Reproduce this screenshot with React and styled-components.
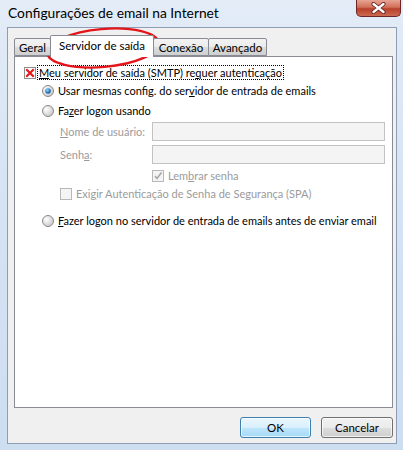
import styled, { createGlobalStyle } from 'styled-components';

const GlobalStyle = createGlobalStyle`
  html, body {
    margin: 0;
    padding: 0;
    background: #ffffff;
  }
  body {
    font-family: Lato, "Liberation Sans", sans-serif;
    font-size: 11px;
    color: #000;
  }
`;

const Window = styled.div`
  position: relative;
  width: 403px;
  height: 450px;
  box-sizing: border-box;
  padding: 0 6px 6px 7px;
  display: flex;
  flex-direction: column;
  background: linear-gradient(180deg, #e3ecf7 0%, #d6e4f4 40%, #cddef1 100%);
`;

const TitleBar = styled.div`
  height: 27px;
  display: flex;
  justify-content: space-between;
  align-items: flex-start;
`;

const Title = styled.div`
  font-size: 13.8px;
  line-height: 27px;
  margin-left: 1px;
  margin-top: -1px;
`;

const CloseButton = styled.div`
  width: 45px;
  height: 17px;
  margin-right: -4px;
  box-sizing: border-box;
  border: 1px solid #6d2626;
  border-top: none;
  border-radius: 0 0 5px 5px;
  background: linear-gradient(180deg, #e8a493 0%, #d0705a 45%, #b8402a 55%, #cc6a50 100%);
  display: flex;
  align-items: center;
  justify-content: center;
`;

const Body = styled.div`
  flex: 1;
  box-sizing: border-box;
  border: 1px solid #8d9db3;
  background: #f0f0f0;
  padding: 7px 3px 5px 6px;
  display: flex;
  flex-direction: column;
`;

const TabStrip = styled.div`
  height: 21px;
  display: flex;
  align-items: flex-end;
  position: relative;
  z-index: 1;
`;

const Tab = styled.div`
  box-sizing: border-box;
  width: ${p => p.$w}px;
  height: ${p => (p.$active ? 22 : 18)}px;
  margin-bottom: ${p => (p.$active ? -1 : 0)}px;
  border: 1px solid #898c95;
  border-bottom: ${p => (p.$active ? 'none' : '1px solid #898c95')};
  margin-left: -1px;
  &:first-child { margin-left: 0; }
  border-radius: 2px 2px 0 0;
  background: ${p => (p.$active ? '#ffffff' : 'linear-gradient(180deg, #f3f3f3 0%, #ebebeb 50%, #dddddd 51%, #cfcfcf 100%)')};
  padding-top: ${p => (p.$active ? 2 : 1)}px;
  text-align: center;
  font-size: 11.5px;
  line-height: 15px;
  z-index: ${p => (p.$active ? 2 : 1)};
`;

const Panel = styled.div`
  height: 352px;
  box-sizing: border-box;
  border: 1px solid #898c95;
  background: #ffffff;
  padding-left: 9px;
`;

const Row = styled.div`
  display: flex;
  align-items: center;
  height: ${p => p.$h || 15}px;
  margin-top: ${p => p.$mt}px;
  padding-left: ${p => p.$indent || 0}px;
  color: ${p => (p.$disabled ? '#9b9b9b' : '#000')};
  white-space: nowrap;
`;

const Label = styled.span`
  margin-left: ${p => p.$gap || 4}px;
  line-height: 13px;
`;

const FocusLabel = styled.span`
  margin-left: 1px;
  padding: 0 1px;
  border: 1px dotted #000;
  line-height: 13px;
`;

const FieldLabel = styled.span`
  width: 92px;
  color: #9b9b9b;
`;

const TextBox = styled.div`
  width: 233px;
  height: 19px;
  box-sizing: border-box;
  border: 1px solid #c2c2c2;
  background: #f4f4f4;
`;

const Key = styled.span`
  text-decoration: underline;
  text-underline-offset: 1px;
`;

const ButtonRow = styled.div`
  display: flex;
  justify-content: flex-end;
  gap: 10px;
  margin-top: 9px;
`;

const Button = styled.div`
  width: ${p => p.$w}px;
  height: 21px;
  box-sizing: border-box;
  border: 1px solid ${p => (p.$default ? '#3c7fb1' : '#707070')};
  border-radius: 3px;
  background: ${p => (p.$default
    ? 'linear-gradient(180deg, #eaf6fd 0%, #d9f0fc 50%, #bee6fd 51%, #a7d9f5 100%)'
    : 'linear-gradient(180deg, #f2f2f2 0%, #ebebeb 50%, #dddddd 51%, #cfcfcf 100%)')};
  box-shadow: inset 0 0 0 1px rgba(255, 255, 255, 0.7);
  display: flex;
  align-items: center;
  justify-content: center;
  font-size: 11.5px;
`;

const Ring = styled.svg`
  position: absolute;
  left: 41px;
  top: 27px;
  pointer-events: none;
`;

function Radio({ checked }) {
  return (
    <svg width="12" height="12" viewBox="0 0 12 12">
      <defs>
        <radialGradient id={checked ? 'rg1' : 'rg0'} cx="0.35" cy="0.35" r="0.7">
          <stop offset="0" stopColor="#ffffff" />
          <stop offset="1" stopColor="#c8c8c8" />
        </radialGradient>
        <radialGradient id="dot" cx="0.4" cy="0.35" r="0.7">
          <stop offset="0" stopColor="#9fd6f8" />
          <stop offset="0.6" stopColor="#2a7fc4" />
          <stop offset="1" stopColor="#174d88" />
        </radialGradient>
      </defs>
      <circle cx="6" cy="6" r="5.5" fill={`url(#${checked ? 'rg1' : 'rg0'})`} stroke="#8a8a8a" />
      {checked && <circle cx="6" cy="6" r="2.8" fill="url(#dot)" />}
    </svg>
  );
}

function Check({ mark, disabled }) {
  return (
    <svg width="12" height="12" viewBox="0 0 12 12">
      <rect x="0.5" y="0.5" width="11" height="11" fill={disabled ? '#f4f4f4' : '#ffffff'} stroke={disabled ? '#b8b8b8' : '#8e8f8f'} />
      {mark === 'x' && (
        <path d="M3 3 L9 9 M9 3 L3 9" stroke="#e31b1b" strokeWidth="2.2" strokeLinecap="square" />
      )}
      {mark === 'v' && (
        <path d="M3 6 L5 8.5 L9.5 2.5" stroke="#a8a8a8" strokeWidth="1.6" fill="none" />
      )}
    </svg>
  );
}

export default function App() {
  return (
    <>
      <GlobalStyle />
      <Window>
        <TitleBar>
          <Title>Configurações de email na Internet</Title>
          <CloseButton>
            <svg width="17" height="12" viewBox="0 0 17 12">
              <path d="M3.5 2 L13.5 10 M13.5 2 L3.5 10" stroke="#5a1a1a" strokeWidth="4" strokeLinecap="round" />
              <path d="M3.5 2 L13.5 10 M13.5 2 L3.5 10" stroke="#ffffff" strokeWidth="2.4" strokeLinecap="round" />
            </svg>
          </CloseButton>
        </TitleBar>
        <Body>
          <TabStrip>
            <Tab $w={37}>Geral</Tab>
            <Tab $w={104} $active>Servidor de saída</Tab>
            <Tab $w={56}>Conexão</Tab>
            <Tab $w={59}>Avançado</Tab>
          </TabStrip>
          <Panel>
            <Row $mt={8}>
              <Check mark="x" />
              <FocusLabel>
                <Key>M</Key>eu servidor de saída (SMTP) re<Key>q</Key>uer autenticação
              </FocusLabel>
            </Row>
            <Row $mt={3} $indent={18}>
              <Radio checked />
              <Label>Usar mesmas config. do ser<Key>v</Key>idor de entrada de emails</Label>
            </Row>
            <Row $mt={5} $indent={18}>
              <Radio />
              <Label>Fa<Key>z</Key>er logon usando</Label>
            </Row>
            <Row $mt={4} $h={19} $indent={36}>
              <FieldLabel><Key>N</Key>ome de usuário:</FieldLabel>
              <TextBox />
            </Row>
            <Row $mt={4} $h={19} $indent={36}>
              <FieldLabel>Senh<Key>a</Key>:</FieldLabel>
              <TextBox />
            </Row>
            <Row $mt={4} $indent={128} $disabled>
              <Check mark="v" disabled />
              <Label>Lem<Key>b</Key>rar senha</Label>
            </Row>
            <Row $mt={3} $indent={36} $disabled>
              <Check disabled />
              <Label>Exi<Key>g</Key>ir Autenticação de Senha de Segurança (SPA)</Label>
            </Row>
            <Row $mt={12} $indent={18}>
              <Radio />
              <Label><Key>F</Key>azer logon no servidor de entrada de emails antes de enviar email</Label>
            </Row>
          </Panel>
          <ButtonRow>
            <Button $w={71} $default>OK</Button>
            <Button $w={72}>Cancelar</Button>
          </ButtonRow>
        </Body>
        <Ring width="130" height="50" viewBox="0 0 130 50">
          <ellipse cx="62" cy="21" rx="56" ry="19" transform="rotate(-5 62 21)" fill="none" stroke="#e4141b" strokeWidth="2.4" />
        </Ring>
      </Window>
    </>
  );
}
